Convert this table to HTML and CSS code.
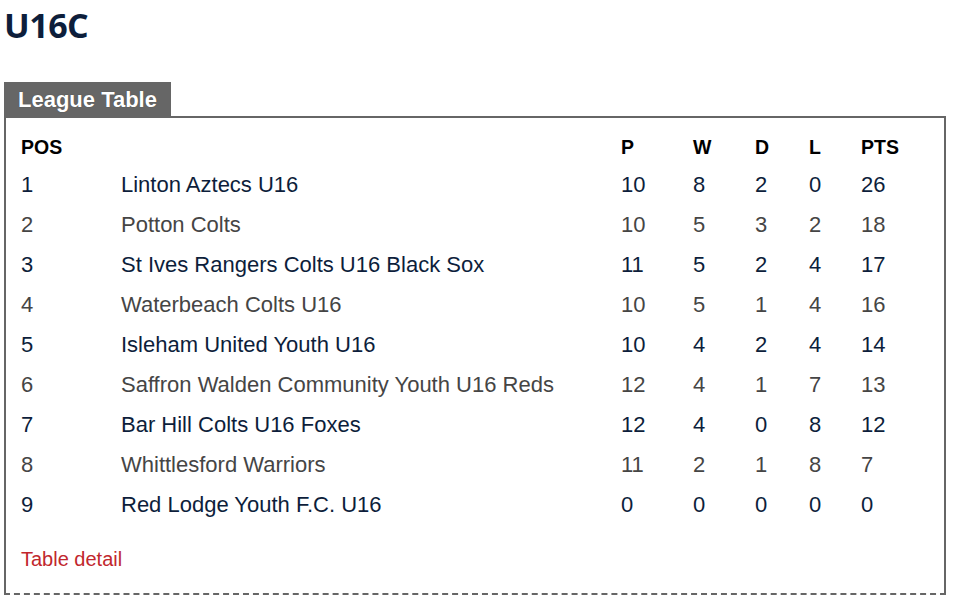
FILE: index.html
```html
<!DOCTYPE html>
<html>
<head>
<meta charset="utf-8">
<link rel="stylesheet" href="styles.css">
</head>
<body>
<h1 class="title">U16C</h1>
<div class="tab">League Table</div>
<div class="box">
  <table class="league">
    <thead>
      <tr><th class="c-pos">POS</th><th class="c-team"></th><th class="c-p">P</th><th class="c-w">W</th><th class="c-d">D</th><th class="c-l">L</th><th class="c-pts">PTS</th></tr>
    </thead>
    <tbody>
      <tr class="odd"><td>1</td><td>Linton Aztecs U16</td><td>10</td><td>8</td><td>2</td><td>0</td><td>26</td></tr>
      <tr class="even"><td>2</td><td>Potton Colts</td><td>10</td><td>5</td><td>3</td><td>2</td><td>18</td></tr>
      <tr class="odd"><td>3</td><td>St Ives Rangers Colts U16 Black Sox</td><td>11</td><td>5</td><td>2</td><td>4</td><td>17</td></tr>
      <tr class="even"><td>4</td><td>Waterbeach Colts U16</td><td>10</td><td>5</td><td>1</td><td>4</td><td>16</td></tr>
      <tr class="odd"><td>5</td><td>Isleham United Youth U16</td><td>10</td><td>4</td><td>2</td><td>4</td><td>14</td></tr>
      <tr class="even"><td>6</td><td>Saffron Walden Community Youth U16 Reds</td><td>12</td><td>4</td><td>1</td><td>7</td><td>13</td></tr>
      <tr class="odd"><td>7</td><td>Bar Hill Colts U16 Foxes</td><td>12</td><td>4</td><td>0</td><td>8</td><td>12</td></tr>
      <tr class="even"><td>8</td><td>Whittlesford Warriors</td><td>11</td><td>2</td><td>1</td><td>8</td><td>7</td></tr>
      <tr class="odd"><td>9</td><td>Red Lodge Youth F.C. U16</td><td>0</td><td>0</td><td>0</td><td>0</td><td>0</td></tr>
    </tbody>
  </table>
  <a class="detail" href="#">Table detail</a>
</div>
</body>
</html>
```
FILE: styles.css
```css
html, body {
  margin: 0;
  padding: 0;
  background: #fff;
}
body {
  font-family: "Liberation Sans", Arial, sans-serif;
  width: 954px;
}
.title {
  font-family: "Open Sans", "DejaVu Sans", sans-serif;
  font-weight: 700;
  font-size: 34px;
  line-height: 50px;
  color: #0d1e3b;
  margin: 0;
  padding: 0 0 0 4px;
  letter-spacing: -0.5px;
}
.tab {
  display: inline-block;
  margin: 32px 0 0 4px;
  background: #666;
  color: #fff;
  font-weight: 700;
  font-size: 22px;
  line-height: 34px;
  height: 33px;
  padding: 1px 14px 0 14px;
  text-shadow: 0 0 1px rgba(0,0,0,0.4);
}
.box {
  margin: 0 8px 0 4px;
  border: 2px solid #666;
  border-bottom: 2px dashed #666;
  padding: 12px 15px 22px 15px;
}
.league {
  border-collapse: collapse;
  width: 100%;
}
.league th, .league td {
  padding: 0;
  text-align: left;
}
.league th {
  font-size: 19.5px;
  font-weight: 700;
  color: #000;
  line-height: 35px;
}
.league td {
  font-size: 22px;
  line-height: 40px;
}
.c-pos { width: 100px; }
.c-team { width: 500px; }
.c-p { width: 72px; }
.c-w { width: 62px; }
.c-d { width: 54px; }
.c-l { width: 52px; }
.odd td { color: #0d1e3b; }
.even td { color: #454545; }
.detail {
  display: block;
  margin-top: 22px;
  font-size: 20px;
  line-height: 24px;
  color: #c1272d;
  text-decoration: none;
}
```
